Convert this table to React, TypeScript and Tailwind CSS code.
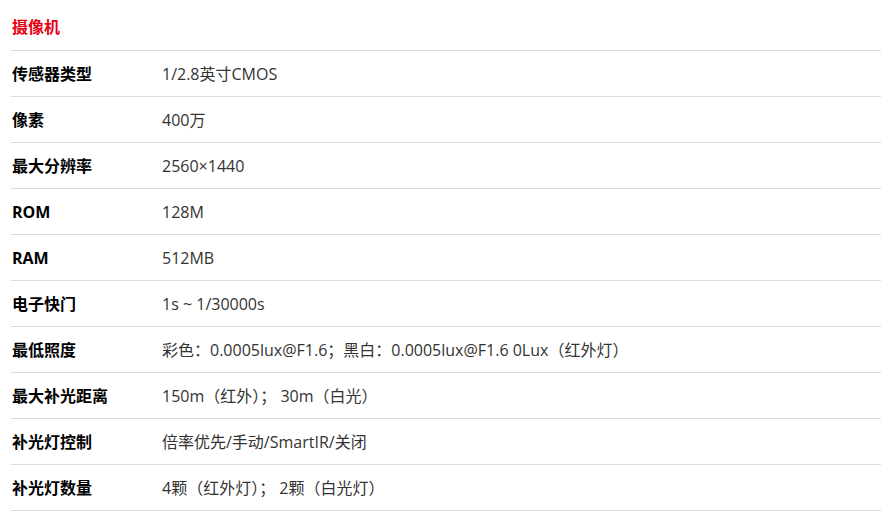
const specs: [string, string][] = [
  ['传感器类型', '1/2.8英寸CMOS'],
  ['像素', '400万'],
  ['最大分辨率', '2560×1440'],
  ['ROM', '128M'],
  ['RAM', '512MB'],
  ['电子快门', '1s ~ 1/30000s'],
  ['最低照度', '彩色：0.0005lux@F1.6；黑白：0.0005lux@F1.6 0Lux（红外灯）'],
  ['最大补光距离', '150m（红外）； 30m（白光）'],
  ['补光灯控制', '倍率优先/手动/SmartIR/关闭'],
  ['补光灯数量', '4颗（红外灯）； 2颗（白光灯）'],
];

export default function App() {
  return (
    <div
      className="bg-white pl-[11px] text-[16px]"
      style={{ fontFamily: '"Open Sans", "Noto Sans CJK SC", sans-serif' }}
    >
      {/* Section title */}
      <div className="h-[51px] border-b border-[#dcdcdc] pl-px pt-[15px] leading-[24px] font-bold text-[#e60012]">
        摄像机
      </div>

      {specs.map(([label, value]) => (
        <div key={label} className="flex h-[46px] items-center border-b border-[#dcdcdc] pl-px">
          <div className="w-[150px] shrink-0 font-bold text-black">{label}</div>
          <div className="text-[#333]">{value}</div>
        </div>
      ))}
    </div>
  );
}
